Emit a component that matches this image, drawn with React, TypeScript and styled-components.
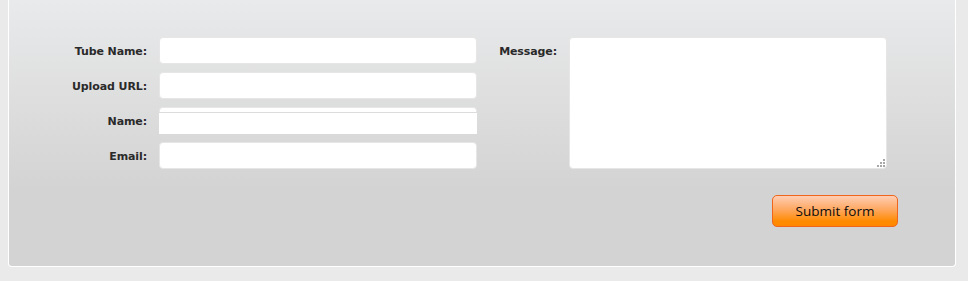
import React from "react";
import styled, { createGlobalStyle } from "styled-components";

const GlobalStyle = createGlobalStyle`
  html, body {
    margin: 0;
    padding: 0;
    background: #e9eae9;
  }
`;

const Panel = styled.form`
  margin: 0 12px 0 8px;
  padding: 37px 0 39px;
  border: 1px solid #ffffff;
  border-top: none;
  border-radius: 0 0 4px 4px;
  background: linear-gradient(to bottom, #e9eaeb 0, #d3d3d3 190px, #d3d3d3 100%);
`;

const Columns = styled.div`
  display: flex;
  align-items: flex-start;
`;

const FieldList = styled.div`
  display: flex;
  flex-direction: column;
  gap: 8px;
`;

const Row = styled.div`
  display: flex;
  align-items: flex-start;
`;

const Label = styled.label<{ $width: number; $offset?: number }>`
  box-sizing: border-box;
  width: ${(p) => p.$width}px;
  height: 27px;
  margin-left: ${(p) => p.$offset ?? 0}px;
  padding-right: 12px;
  text-align: right;
  font-family: "DejaVu Sans", Verdana, sans-serif;
  font-weight: bold;
  font-size: 11px;
  letter-spacing: -0.1px;
  line-height: 30px;
  color: #2a2a2a;
`;

const Input = styled.input`
  box-sizing: border-box;
  width: 318px;
  height: 27px;
  margin: 0;
  padding: 0 6px;
  border: 1px solid #e6e6e6;
  border-radius: 4px;
  background: #ffffff;
  outline: none;
`;

const SplitField = styled.div`
  width: 318px;
  height: 27px;
  display: flex;
  flex-direction: column;
`;

const SplitCap = styled.div`
  box-sizing: border-box;
  height: 5px;
  border: 1px solid #e6e6e6;
  border-bottom: none;
  border-radius: 4px 4px 0 0;
  background: #ffffff;
`;

const SplitInput = styled.input`
  box-sizing: border-box;
  width: 318px;
  height: 22px;
  margin: 0;
  padding: 0 6px;
  border: none;
  border-top: 1px solid #dcdcdc;
  background: #ffffff;
  outline: none;
`;

const TextAreaWrap = styled.div`
  position: relative;
`;

const TextArea = styled.textarea`
  box-sizing: border-box;
  width: 318px;
  height: 132px;
  margin: 0;
  padding: 4px 6px;
  border: 1px solid #e6e6e6;
  border-radius: 4px;
  background: #ffffff;
  outline: none;
  resize: none;
  display: block;
`;

const Grip = styled.svg`
  position: absolute;
  right: 1px;
  bottom: 1px;
  width: 9px;
  height: 9px;
  pointer-events: none;
`;

const Actions = styled.div`
  display: flex;
  justify-content: flex-end;
  margin-top: 26px;
  padding-right: 57px;
`;

const SubmitButton = styled.button`
  box-sizing: border-box;
  width: 126px;
  height: 32px;
  border: 1px solid #f0641c;
  border-radius: 5px;
  background: linear-gradient(to bottom, #ffcdb4 0%, #ffa860 45%, #ff8a00 85%, #ff8800 100%);
  font-family: "Open Sans", "DejaVu Sans", sans-serif;
  font-size: 13.5px;
  color: #0c0c0c;
  cursor: pointer;
`;

const gripDots = [
  [6, 0],
  [3, 3],
  [6, 3],
  [0, 6],
  [3, 6],
  [6, 6],
];

export default function App() {
  return (
    <>
      <GlobalStyle />
      <Panel onSubmit={(e) => e.preventDefault()}>
        <Columns>
          <FieldList>
            <Row>
              <Label $width={150}>Tube Name:</Label>
              <Input type="text" />
            </Row>
            <Row>
              <Label $width={150}>Upload URL:</Label>
              <Input type="text" />
            </Row>
            <Row>
              <Label $width={150}>Name:</Label>
              <SplitField>
                <SplitCap />
                <SplitInput type="text" />
              </SplitField>
            </Row>
            <Row>
              <Label $width={150}>Email:</Label>
              <Input type="email" />
            </Row>
          </FieldList>
          <Row>
            <Label $width={80} $offset={12}>Message:</Label>
            <TextAreaWrap>
              <TextArea />
              <Grip viewBox="0 0 9 9">
                {gripDots.map(([x, y]) => (
                  <rect key={`${x}-${y}`} x={x} y={y} width="2" height="2" fill="#a8a8a8" />
                ))}
              </Grip>
            </TextAreaWrap>
          </Row>
        </Columns>
        <Actions>
          <SubmitButton type="submit">Submit form</SubmitButton>
        </Actions>
      </Panel>
    </>
  );
}
